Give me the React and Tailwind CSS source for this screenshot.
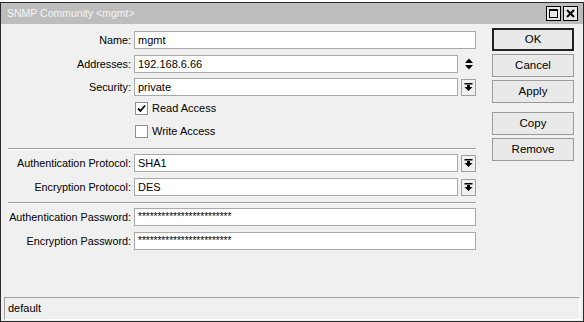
import React from "react";

const font = { fontFamily: '"Liberation Sans", Arial, sans-serif' };

function DropBtn() {
  return (
    <div className="ml-[3px] w-[15px] h-[17px] border border-[#a0a0a0] bg-[#f0f0f0] flex items-center justify-center">
      <svg width="9" height="10" viewBox="0 0 9 10">
        <rect x="0.5" y="1" width="8" height="1.5" fill="#000" />
        <rect x="3" y="3" width="3" height="2" fill="#000" />
        <polygon points="0.5,5 8.5,5 4.5,9" fill="#000" />
      </svg>
    </div>
  );
}

function Row({ label, value, kind, mt, pw }) {
  return (
    <div className={`flex items-center h-[18px] ${mt}`}>
      <div className="w-[130px] text-right text-[10.8px] text-black leading-none whitespace-nowrap">{label}</div>
      <div
        className={`ml-[3px] h-[18px] bg-white border border-[#a9a9a9] flex pl-[3px] text-black leading-none ${
          pw ? "text-[10px] items-start pt-[3px]" : "text-[11px] items-center"
        } ${kind === "drop" || kind === "updown" ? "w-[324px]" : "w-[342px]"}`}
      >
        {value}
      </div>
      {kind === "drop" && <DropBtn />}
      {kind === "updown" && (
        <div className="ml-[4px] w-[13px] h-[17px] flex items-center justify-center">
          <svg width="10" height="14" viewBox="0 0 10 14">
            <polygon points="1,6 9,6 5,1.5" fill="#000" />
            <polygon points="1,8 9,8 5,12.5" fill="#000" />
          </svg>
        </div>
      )}
    </div>
  );
}

function Check({ label, checked, mt }) {
  return (
    <div className={`flex items-center h-[13px] ${mt}`}>
      <div className="w-[134px]" />
      <div className="w-[13px] h-[13px] bg-white border border-[#8f8f8f] flex items-center justify-center">
        {checked && (
          <svg width="9" height="9" viewBox="0 0 9 9">
            <polyline points="1,4.5 3.5,7 8,1.5" fill="none" stroke="#000" strokeWidth="1.8" />
          </svg>
        )}
      </div>
      <div className="ml-[4px] text-[11px] text-black leading-none">{label}</div>
    </div>
  );
}

function Sep({ mt }) {
  return (
    <div className={`ml-[7px] w-[468px] ${mt}`}>
      <div className="h-px bg-[#a0a0a0]" />
      <div className="h-px bg-white" />
    </div>
  );
}

function Btn({ children, def, mt }) {
  return (
    <div
      className={`w-[82px] h-[23px] flex items-center justify-center text-[11.5px] text-black leading-none bg-[#e9e9e9] ${
        def ? "border-2 border-[#222]" : "border border-[#9a9a9a]"
      } ${mt}`}
    >
      {children}
    </div>
  );
}

export default function App() {
  return (
    <div className="w-[584px] h-[322px] bg-white pt-[2px]" style={font}>
      <div className="w-[584px] h-[320px] border border-[#2a2a2a] flex flex-col">
        <div className="h-[21px] bg-[#bdbdbd] flex items-center pl-[6px] pr-[5px] shrink-0">
          <div className="text-[10.5px] text-[#f4f4f4] leading-none flex-1">SNMP Community &lt;mgmt&gt;</div>
          <div className="w-[15px] h-[15px] border border-black bg-[#e8e8e8] flex items-center justify-center">
            <div className="w-[9px] h-[9px] border border-black border-t-2" />
          </div>
          <div className="ml-[2px] w-[15px] h-[15px] border border-black bg-[#e8e8e8] flex items-center justify-center">
            <svg width="9" height="9" viewBox="0 0 9 9">
              <path d="M1,1 L8,8 M8,1 L1,8" stroke="#000" strokeWidth="2" />
            </svg>
          </div>
        </div>
        <div className="flex-1 bg-[#f0f0f0] flex flex-col">
          <div className="flex-1 flex">
            <div className="w-[491px] pt-[7px] flex flex-col">
              <Row label="Name:" value="mgmt" mt="" />
              <Row label="Addresses:" value="192.168.6.66" kind="updown" mt="mt-[6px]" />
              <Row label="Security:" value="private" kind="drop" mt="mt-[5px]" />
              <Check label="Read Access" checked mt="mt-[6px]" />
              <Check label="Write Access" mt="mt-[10px]" />
              <Sep mt="mt-[10px]" />
              <Row label="Authentication Protocol:" value="SHA1" kind="drop" mt="mt-[4px]" />
              <Row label="Encryption Protocol:" value="DES" kind="drop" mt="mt-[6px]" />
              <Sep mt="mt-[6px]" />
              <Row label="Authentication Password:" value="************************" pw mt="mt-[4px]" />
              <Row label="Encryption Password:" value="************************" pw mt="mt-[6px]" />
            </div>
            <div className="pt-[4px] flex flex-col">
              <Btn def mt="">OK</Btn>
              <Btn mt="mt-[3px]">Cancel</Btn>
              <Btn mt="mt-[3px]">Apply</Btn>
              <Btn mt="mt-[9px]">Copy</Btn>
              <Btn mt="mt-[3px]">Remove</Btn>
            </div>
          </div>
          <div className="mx-[3px] mb-[1px] h-[23px] border-t border-l border-[#a0a0a0] border-b border-b-white border-r border-r-white flex items-center pl-[3px] text-[11px] text-black leading-none">
            default
          </div>
        </div>
      </div>
    </div>
  );
}
